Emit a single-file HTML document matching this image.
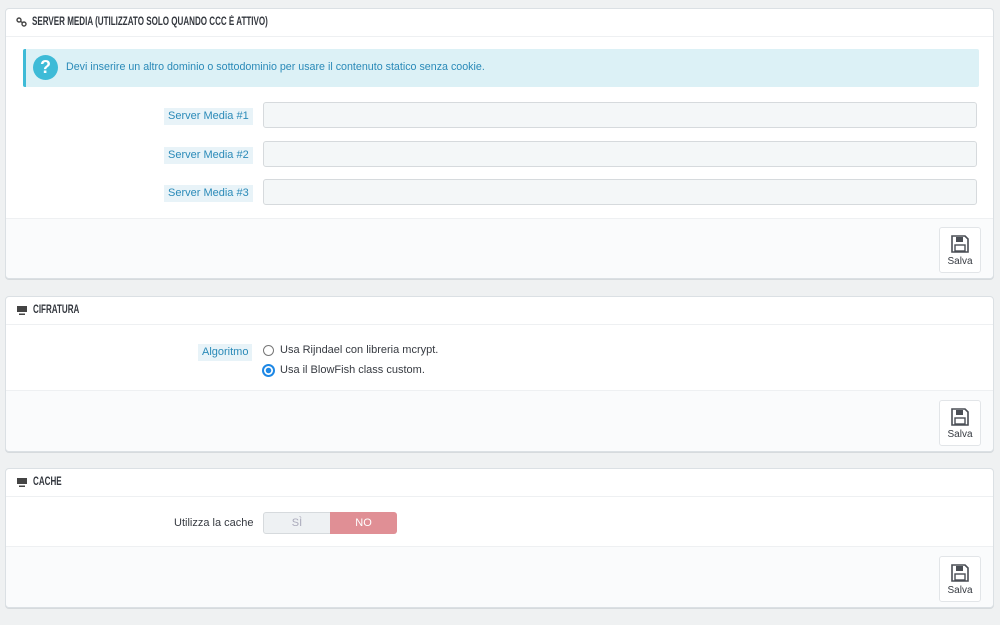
<!DOCTYPE html>
<html><head><meta charset="utf-8"><style>
body{margin:0;background:#eff1f2;font-family:"Liberation Sans",sans-serif;font-size:11px;color:#363a41;width:1000px;height:625px;overflow:hidden;position:relative}
.p{position:absolute;left:5px;width:987px;background:#fff;border:1px solid #dbe0e4;border-radius:4px;box-shadow:0 1px 0 #d6dadd}
.h{height:27px;border-bottom:1px solid #eef0f2;line-height:27px;padding-left:10px;font-size:11.5px;font-weight:bold;color:#363a41}
.h span{display:inline-block;transform:scaleX(.7);transform-origin:left center;font-weight:bold;color:#33373e}
.h svg{vertical-align:-2px;margin-right:5px}
.f{position:absolute;left:0;right:0;bottom:0;background:#fafbfc;border-top:1px solid #eef0f2;border-radius:0 0 4px 4px}
.btn{position:absolute;right:12px;bottom:5px;width:40px;height:44px;background:#fff;border:1px solid #e2e5e8;border-radius:3px;text-align:center;font-size:10px;color:#363a41}
.btn svg{display:block;margin:6px auto 2px}
.lbl{position:absolute;background:#e8f3f8;color:#2a8ab8;font-size:11px;padding:1px 4px;line-height:15px}
.in{position:absolute;left:257px;width:712px;height:24px;background:#f4f7f8;border:1px solid #d6dadd;border-radius:3px}
</style></head><body>
<div class="p" style="top:8px;height:269px">
 <div class="h"><svg width="11" height="10" viewBox="0 0 11 10"><circle cx="3" cy="3" r="2" fill="none" stroke="#444" stroke-width="1.4"/><circle cx="8" cy="7" r="2" fill="none" stroke="#444" stroke-width="1.4"/><path d="M4.5 4.5l2 1" stroke="#444" stroke-width="1.4"/></svg><span>SERVER MEDIA (UTILIZZATO SOLO QUANDO CCC È ATTIVO)</span></div>
 <div style="position:absolute;left:17px;top:40px;width:953px;height:38px;background:#dcf1f6;border-left:3px solid #3ebbd7;border-radius:2px">
  <div style="position:absolute;left:7px;top:6px;width:25px;height:25px;border-radius:50%;background:#3ebbd7;color:#fff;font-weight:bold;font-size:18px;text-align:center;line-height:25px">?</div>
  <div style="position:absolute;left:40px;top:12px;color:#2a8ab8;font-size:10.7px">Devi inserire un altro dominio o sottodominio per usare il contenuto statico senza cookie.</div>
 </div>
 <div class="lbl" style="left:158px;top:99px">Server Media #1</div><div class="in" style="top:93px"></div>
 <div class="lbl" style="left:158px;top:138px">Server Media #2</div><div class="in" style="top:132px"></div>
 <div class="lbl" style="left:158px;top:176px">Server Media #3</div><div class="in" style="top:170px"></div>
 <div class="f" style="height:59px"><div class="btn"><svg width="20" height="20" viewBox="0 0 20 20"><path d="M2 2h13l3 3v13H2z" fill="none" stroke="#4a4e55" stroke-width="1.6"/><rect x="6" y="3" width="7" height="5" fill="#4a4e55"/><rect x="5" y="11" width="10" height="6" fill="none" stroke="#4a4e55" stroke-width="1.4"/></svg>Salva</div></div>
</div>
<div class="p" style="top:296px;height:154px">
 <div class="h"><svg width="12" height="10" viewBox="0 0 12 10"><rect x="1" y="1" width="10" height="6" fill="#444"/><rect x="3" y="8.5" width="6" height="1.5" fill="#444"/></svg><span>CIFRATURA</span></div>
 <div class="lbl" style="left:192px;top:47px">Algoritmo</div>
 <div style="position:absolute;left:257px;top:48px;width:9px;height:9px;border:1px solid #777;border-radius:50%"></div>
 <div style="position:absolute;left:274px;top:47px">Usa Rijndael con libreria mcrypt.</div>
 <div style="position:absolute;left:256px;top:67px;width:9px;height:9px;border:2px solid #1e88e5;border-radius:50%;background:radial-gradient(#1e88e5 2.5px,#fff 3px)"></div>
 <div style="position:absolute;left:274px;top:67px">Usa il BlowFish class custom.</div>
 <div class="f" style="height:60px"><div class="btn"><svg width="20" height="20" viewBox="0 0 20 20"><path d="M2 2h13l3 3v13H2z" fill="none" stroke="#4a4e55" stroke-width="1.6"/><rect x="6" y="3" width="7" height="5" fill="#4a4e55"/><rect x="5" y="11" width="10" height="6" fill="none" stroke="#4a4e55" stroke-width="1.4"/></svg>Salva</div></div>
</div>
<div class="p" style="top:468px;height:138px">
 <div class="h"><svg width="12" height="10" viewBox="0 0 12 10"><rect x="1" y="1" width="10" height="6" fill="#444"/><rect x="3" y="8.5" width="6" height="1.5" fill="#444"/></svg><span>CACHE</span></div>
 <div style="position:absolute;left:168px;top:48px">Utilizza la cache</div>
 <div style="position:absolute;left:257px;top:43px;width:66px;height:20px;background:#eef1f3;border:1px solid #d6dadd;border-radius:3px 0 0 3px;text-align:center;line-height:20px;color:#aab">SÌ</div>
 <div style="position:absolute;left:324px;top:43px;width:67px;height:22px;background:#e08f95;border-radius:0 3px 3px 0;text-align:center;line-height:22px;color:#fff">NO</div>
 <div class="f" style="height:60px"><div class="btn"><svg width="20" height="20" viewBox="0 0 20 20"><path d="M2 2h13l3 3v13H2z" fill="none" stroke="#4a4e55" stroke-width="1.6"/><rect x="6" y="3" width="7" height="5" fill="#4a4e55"/><rect x="5" y="11" width="10" height="6" fill="none" stroke="#4a4e55" stroke-width="1.4"/></svg>Salva</div></div>
</div>
</body></html>
